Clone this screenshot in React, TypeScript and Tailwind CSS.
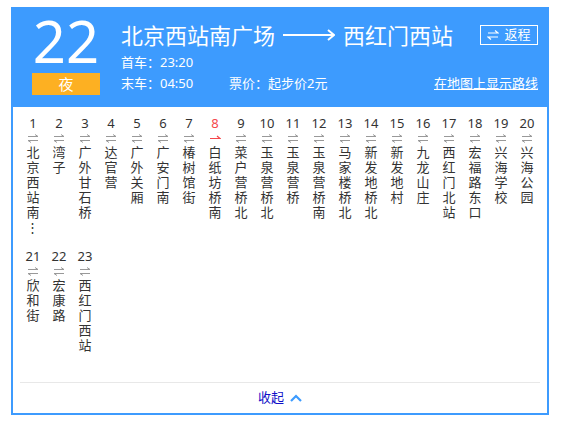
import React from "react";

const stations = [
  "北京西站南广场", "湾子", "广外甘石桥", "达官营", "广外关厢", "广安门南", "椿树馆街",
  "白纸坊桥南", "菜户营桥北", "玉泉营桥北", "玉泉营桥", "玉泉营桥南", "马家楼桥北",
  "新发地桥北", "新发地村", "九龙山庄", "西红门北站", "宏福路东口", "兴海学校",
  "兴海公园", "欣和街", "宏康路", "西红门西站",
];

const CURRENT = 8;

function BothWays() {
  return (
    <svg width="12" height="9" viewBox="0 0 12 9" className="text-[#999]">
      <path d="M1 2.5H11L8 0.5" fill="none" stroke="currentColor" strokeWidth="1" />
      <path d="M11 6.5H1L4 8.5" fill="none" stroke="currentColor" strokeWidth="1" />
    </svg>
  );
}

function OneWay() {
  return (
    <svg width="12" height="9" viewBox="0 0 12 9" className="text-[#f5474b]">
      <path d="M1 4.5H11L8 2" fill="none" stroke="currentColor" strokeWidth="1.2" />
    </svg>
  );
}

function Station({ index, name }: { index: number; name: string }) {
  const current = index === CURRENT;
  const chars = name.length > 5 ? [...name.slice(0, 5).split(""), "⋮"] : name.split("");
  return (
    <div className="flex flex-col items-center">
      <div className={`text-[13px] leading-[16px] ${current ? "text-[#f5474b]" : "text-[#333]"}`}>{index}</div>
      <div className="h-[14px] flex items-center">{current ? <OneWay /> : <BothWays />}</div>
      <div className="flex flex-col items-center text-[13px] leading-[15px] text-[#333]">
        {chars.map((c, i) => (
          <span key={i}>{c}</span>
        ))}
      </div>
    </div>
  );
}

export default function App() {
  return (
    <div className="pl-[11px] pt-[7px]" style={{ fontFamily: '"Noto Sans", "Noto Sans CJK SC", sans-serif' }}>
      <div className="w-[538px] border-2 border-[#3d9bfe] bg-white">
        {/* header */}
        <div className="h-[98px] bg-[#3d9bfe] text-white flex pl-[19px] pr-[9px]">
          <div className="w-[68px] flex flex-col items-center pt-[3px]">
            <div className="text-[58px] leading-[58px]">22</div>
            <div className="mt-[3px] w-[68px] h-[22px] bg-[#fdb022] text-[15px] leading-[22px] text-center">夜</div>
          </div>
          <div className="flex-1 ml-[21px] pt-[13px]">
            <div className="flex items-center h-[26px]">
              <span className="text-[22px] leading-[26px]">北京西站南广场</span>
              <svg width="52" height="12" viewBox="0 0 52 12" className="mx-[8px]">
                <path d="M0 6H50" stroke="white" strokeWidth="2" />
                <path d="M45 1L51 6L45 11" fill="none" stroke="white" strokeWidth="2" />
              </svg>
              <span className="text-[22px] leading-[26px]">西红门西站</span>
              <div className="ml-auto w-[58px] h-[20px] border border-white flex items-center justify-center gap-[5px] text-[13px]">
                <svg width="12" height="10" viewBox="0 0 12 10">
                  <path d="M1 3H11L8 0.5" fill="none" stroke="white" strokeWidth="1.2" />
                  <path d="M11 7H1L4 9.5" fill="none" stroke="white" strokeWidth="1.2" />
                </svg>
                <span>返程</span>
              </div>
            </div>
            <div className="text-[13px] leading-[21px] mt-[4px]">首车：23:20</div>
            <div className="flex text-[13px] leading-[21px]">
              <span className="w-[108px]">末车：04:50</span>
              <span>票价：起步价2元</span>
              <span className="ml-auto underline">在地图上显示路线</span>
            </div>
          </div>
        </div>

        {/* stations */}
        <div className="grid grid-cols-[repeat(20,26px)] gap-y-[13px] pt-[8px] px-[7px] pb-[29px]">
          {stations.map((s, i) => (
            <Station key={i} index={i + 1} name={s} />
          ))}
        </div>

        {/* footer */}
        <div className="mx-[7px] border-t border-[#e8e8e8] h-[31px] flex items-center justify-center gap-[6px]">
          <span className="text-[13px] text-[#1010c8]">收起</span>
          <svg width="12" height="8" viewBox="0 0 12 8">
            <path d="M1 7L6 2L11 7" fill="none" stroke="#3d9bfe" strokeWidth="2.2" />
          </svg>
        </div>
      </div>
    </div>
  );
}
